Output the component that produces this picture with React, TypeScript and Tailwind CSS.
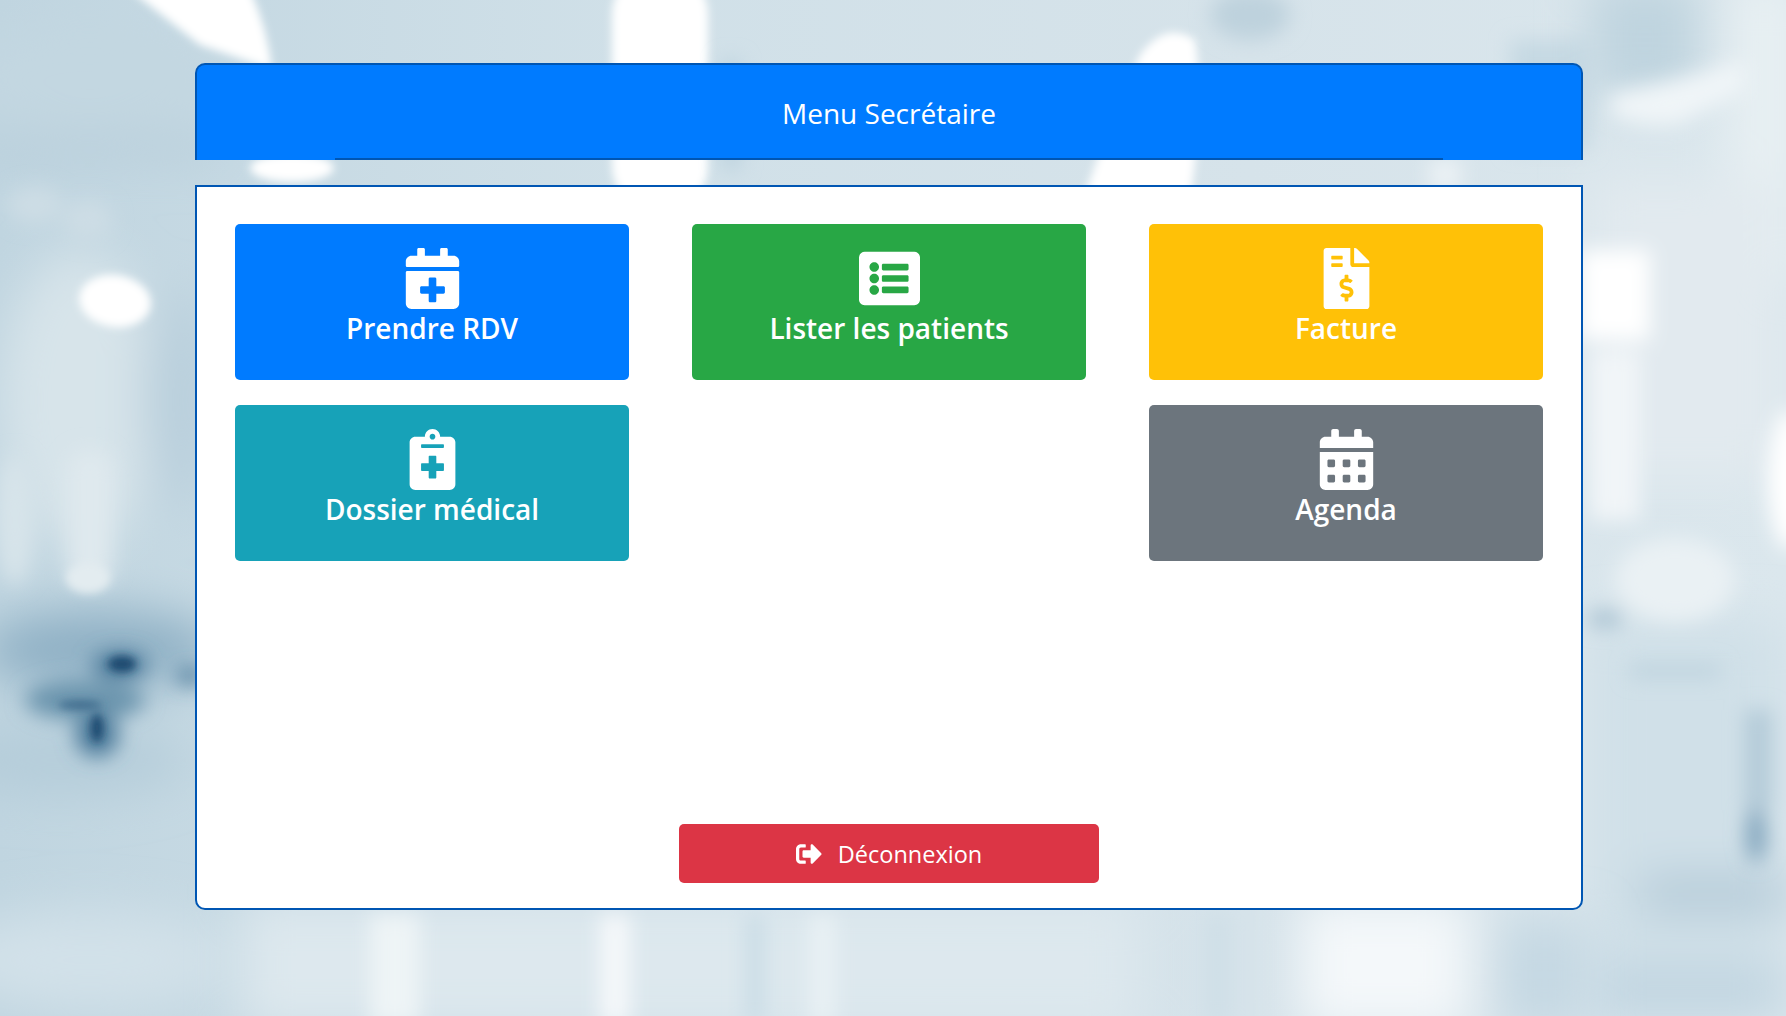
import { FaCalendarPlus, FaListAlt, FaFileInvoiceDollar, FaNotesMedical, FaCalendarAlt, FaSignOutAlt } from "react-icons/fa";
import type { IconType } from "react-icons";

function Backdrop() {
  return (
    <svg className="absolute inset-0 w-full h-full" viewBox="0 0 1786 1016" preserveAspectRatio="none" aria-hidden="true">
      <defs>
        <filter id="b3" x="-50%" y="-50%" width="200%" height="200%"><feGaussianBlur stdDeviation="4" /></filter>
        <filter id="b10" x="-50%" y="-50%" width="200%" height="200%"><feGaussianBlur stdDeviation="10" /></filter>
        <filter id="b24" x="-60%" y="-60%" width="220%" height="220%"><feGaussianBlur stdDeviation="24" /></filter>
        <linearGradient id="base" x1="0" y1="0" x2="1" y2="0">
          <stop offset="0" stopColor="#c0d5e0" />
          <stop offset="0.35" stopColor="#d0e0e8" />
          <stop offset="0.7" stopColor="#d6e3ea" />
          <stop offset="1" stopColor="#dbe7ed" />
        </linearGradient>
      </defs>
      <rect width="1786" height="1016" fill="url(#base)" />
      {/* left side haze */}
      <g filter="url(#b24)">
        <ellipse cx="90" cy="80" rx="130" ry="60" fill="#c3d7e1" />
        <rect x="-20" y="140" width="240" height="18" fill="#b3cad8" />
        <ellipse cx="80" cy="400" rx="80" ry="150" fill="#d7e4ea" />
        <ellipse cx="175" cy="400" rx="30" ry="110" fill="#b7cedb" />
        <ellipse cx="100" cy="650" rx="120" ry="40" fill="#8fb0c5" />
        <ellipse cx="60" cy="760" rx="130" ry="35" fill="#b5cdda" />
        <ellipse cx="90" cy="960" rx="150" ry="50" fill="#d2e1e9" />
      </g>
      <g filter="url(#b10)">
        <ellipse cx="35" cy="205" rx="28" ry="18" fill="#cddde5" />
        <ellipse cx="88" cy="220" rx="24" ry="20" fill="#cddde5" />
        <rect x="68" y="450" width="44" height="135" rx="20" fill="#dfe9ee" />
        <ellipse cx="15" cy="520" rx="20" ry="65" fill="#d7e4ea" />
        <ellipse cx="85" cy="700" rx="60" ry="20" fill="#6c95ae" />
        <ellipse cx="120" cy="665" rx="28" ry="14" fill="#4d7c9b" />
        <ellipse cx="97" cy="735" rx="22" ry="22" fill="#4d7c9b" />
        <ellipse cx="190" cy="676" rx="14" ry="8" fill="#4d7c9b" />
      </g>
      <g filter="url(#b3)">
        <ellipse cx="115" cy="301" rx="36" ry="26" fill="#ffffff" transform="rotate(8 115 301)" />
        <ellipse cx="88" cy="578" rx="22" ry="15" fill="#e3ecf0" />
        <ellipse cx="122" cy="664" rx="14" ry="8" fill="#1f4a70" />
        <ellipse cx="97" cy="728" rx="6" ry="14" fill="#1f4a70" />
        <ellipse cx="80" cy="705" rx="22" ry="4" fill="#3a678a" />
        {/* bright shapes along the top */}
        <path d="M130 -10 H250 Q268 30 272 70 Q245 60 200 45 Z" fill="#ffffff" />
        <rect x="612" y="-30" width="96" height="240" rx="44" fill="#ffffff" />
        <path d="M1140 55 Q1165 20 1195 40 Q1205 100 1190 200 H1083 Q1110 120 1140 55 Z" fill="#ffffff" />
        <ellipse cx="292" cy="168" rx="42" ry="14" fill="#ffffff" />
      </g>
      {/* centre and top bands */}
      <g filter="url(#b10)">
        <rect x="722" y="60" width="18" height="110" fill="#bcd2de" />
        <ellipse cx="1250" cy="15" rx="40" ry="25" fill="#bed2dd" />
        <rect x="1510" y="40" width="80" height="110" fill="#c6d9e3" />
        <rect x="1430" y="160" width="30" height="30" fill="#edf3f6" />
      </g>
      {/* right side */}
      <g filter="url(#b24)">
        <rect x="1590" y="-20" width="110" height="120" fill="#bfd4df" />
        <rect x="1730" y="-20" width="70" height="300" fill="#e8f0f3" />
        <rect x="1590" y="180" width="190" height="300" fill="#e2eaef" />
        <rect x="1590" y="620" width="196" height="330" fill="#d0e0e8" />
        <rect x="1640" y="880" width="150" height="28" fill="#a7c1d1" />
        <rect x="1590" y="960" width="196" height="60" fill="#c1d5e1" />
      </g>
      <g filter="url(#b10)">
        <path d="M1610 95 Q1680 80 1745 60 L1745 90 Q1700 115 1680 125 Q1640 130 1610 115 Z" fill="#f0f5f8" />
        <rect x="1580" y="250" width="70" height="90" fill="#ffffff" />
        <rect x="1590" y="350" width="50" height="170" fill="#f1f5f8" />
        <ellipse cx="1675" cy="580" rx="60" ry="42" fill="#eaf1f4" />
        <rect x="1590" y="612" width="30" height="14" fill="#a3bdce" />
        <rect x="1630" y="665" width="90" height="12" fill="#bcd1dd" />
        <rect x="1745" y="710" width="26" height="100" fill="#b3cad8" />
        <ellipse cx="1756" cy="835" rx="10" ry="28" fill="#7fa3bb" />
        <ellipse cx="1790" cy="480" rx="22" ry="70" fill="#ffffff" />
      </g>
      {/* bottom stripes */}
      <g filter="url(#b24)">
        <rect x="240" y="900" width="900" height="130" fill="#dde8ee" />
        <rect x="1300" y="900" width="170" height="130" fill="#f4f8fa" />
        <rect x="1500" y="920" width="90" height="110" fill="#c5d8e3" />
      </g>
      <g filter="url(#b10)">
        <rect x="370" y="915" width="50" height="110" fill="#eef4f6" />
        <rect x="600" y="915" width="30" height="110" fill="#f5f8fa" />
        <rect x="745" y="915" width="20" height="110" fill="#cbdde6" />
        <rect x="810" y="915" width="25" height="110" fill="#e9f1f4" />
        <rect x="1205" y="915" width="25" height="110" fill="#cfdfe7" />
      </g>
    </svg>
  );
}

const tiles: { label: string; Icon: IconType; bg: string }[] = [
  { label: "Prendre RDV", Icon: FaCalendarPlus, bg: "bg-[#007bff]" },
  { label: "Lister les patients", Icon: FaListAlt, bg: "bg-[#28a745]" },
  { label: "Facture", Icon: FaFileInvoiceDollar, bg: "bg-[#ffc107]" },
  { label: "Dossier médical", Icon: FaNotesMedical, bg: "bg-[#17a2b8]" },
];

function Tile({ label, Icon, bg }: { label: string; Icon: IconType; bg: string }) {
  return (
    <a className={`${bg} h-[156px] rounded-[5px] text-white flex flex-col items-center pt-6`}>
      <Icon size={61} className="shrink-0" />
      <span className="text-[28px] font-semibold leading-[42px] -mt-[2px]">{label}</span>
    </a>
  );
}

export default function App() {
  return (
    <div className="relative min-h-[1016px] overflow-hidden font-['Open_Sans','Noto_Sans',sans-serif] pt-[63px] pl-[195px] pr-[203px]">
      <Backdrop />
      <div className="relative">
        <header className="relative h-[97px] bg-[#007bff] border-2 border-b-0 border-[#0056b3] rounded-t-[10px] flex items-center justify-center text-white text-[28px] leading-[42px]">
          <h1>Menu Secrétaire</h1>
          <div className="absolute bottom-0 left-[138px] right-[138px] h-[2px] bg-[#0056b3]" />
        </header>
        <main className="mt-[25px] h-[725px] bg-white border-2 border-[#0056b3] rounded-b-[10px] px-[38px] pt-[37px] pb-[25px] flex flex-col justify-between">
          <div className="grid grid-cols-3 gap-x-[63px] gap-y-[25px]">
            <Tile {...tiles[0]} />
            <Tile {...tiles[1]} />
            <Tile {...tiles[2]} />
            <Tile {...tiles[3]} />
            <div />
            <Tile label="Agenda" Icon={FaCalendarAlt} bg="bg-[#6c757d]" />
          </div>
          <button className="self-center w-[420px] h-[59px] bg-[#dc3545] rounded-[5px] text-white text-[23.5px] flex items-center justify-center gap-4">
            <FaSignOutAlt size={26} />
            <span className="pt-[2px]">Déconnexion</span>
          </button>
        </main>
      </div>
    </div>
  );
}
